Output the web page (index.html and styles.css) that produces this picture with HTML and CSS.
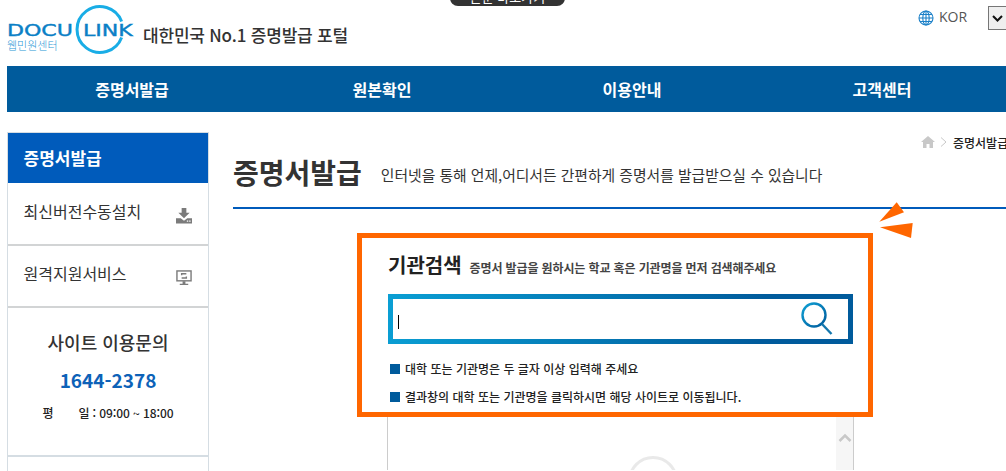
FILE: index.html
```html
<!DOCTYPE html>
<html lang="ko">
<head>
<meta charset="utf-8">
<title>DOCU LINK</title>
<link rel="stylesheet" href="styles.css">
</head>
<body>
<div class="toast"><span>본문 바로가기</span></div>
<div class="page">
  <header class="top">
    <div class="brand">
      <svg class="logo" width="128" height="56" viewBox="0 0 128 56">
        <path class="logo-ring" d="M114.600 20.500A23 23 0 1 0 114.600 36.500"/>
        <text class="logo-word" transform="translate(0 35) scale(1.380 1)" x="0" y="0">DOCU</text>
        <text class="logo-word" transform="translate(76 35) scale(1.380 1)" x="0" y="0">LINK</text>
        <text class="logo-sub" x="0" y="49">웹민원센터</text>
      </svg>
      <strong class="slogan">대한민국 No.1 증명발급 포털</strong>
    </div>
    <div class="lang">
      <svg class="globe" width="16" height="16" viewBox="0 0 16 16">
        <circle cx="8" cy="8" r="7"/>
        <ellipse cx="8" cy="8" rx="3.200" ry="7"/>
        <path d="M1 8H15M2 4.500H14M2 11.500H14M8 1V15"/>
      </svg>
      <span class="lang-label">KOR</span>
      <div class="lang-select">
        <svg width="11" height="7" viewBox="0 0 11 7"><path d="M1 1L5.500 5.500L10 1"/></svg>
      </div>
    </div>
  </header>
  <nav class="gnb">
    <a>증명서발급</a><a>원본확인</a><a>이용안내</a><a>고객센터</a>
  </nav>
  <div class="body">
    <aside class="side">
      <h2 class="side-title">증명서발급</h2>
      <div class="side-item">
        <span>최신버전수동설치</span>
        <svg width="16" height="16" viewBox="0 0 17 17">
          <path class="ic-fill" d="M6 0H11V5H14.500L8.500 11L2.500 5H6Z"/>
          <path class="ic-fill" d="M0 11H5L8.500 13.500L12 11H17V16.500H0Z"/>
          <path class="ic-dots" d="M11.500 14H13M14 14H15.500"/>
        </svg>
      </div>
      <div class="side-item">
        <span>원격지원서비스</span>
        <svg width="16" height="16" viewBox="0 0 17 17">
          <rect class="ic-line" x="1" y="1" width="15" height="10.500"/>
          <path class="ic-fill" d="M7 12H10V14.500H13V16H4V14.500H7Z"/>
          <path class="ic-line" d="M6 5.500V4H11M11 7V8.500H6"/>
        </svg>
      </div>
      <div class="contact">
        <h3 class="contact-title">사이트 이용문의</h3>
        <p class="contact-tel">1644-2378</p>
        <p class="contact-time"><span class="day">평</span><span class="day">일</span> : 09:00 ~ 18:00</p>
      </div>
      <div class="side-rest"></div>
    </aside>
    <main class="main">
      <div class="crumb">
        <svg class="crumb-icon" width="14" height="12" viewBox="0 0 14 12"><path class="crumb-home" d="M7 0L14 6H12V12H8.500V8H5.500V12H2V6H0Z"/></svg>
        <svg width="7" height="10" viewBox="0 0 7 10"><path class="crumb-sep" d="M1 0.500L6 5L1 9.500"/></svg>
        <span>증명서발급</span>
      </div>
      <div class="heading">
        <h1>증명서발급</h1>
        <p>인터넷을 통해 언제,어디서든 간편하게 증명서를 발급받으실 수 있습니다</p>
      </div>
      <section class="panel">
        <svg class="arrows" width="36" height="39" viewBox="0 0 36 39">
          <polygon points="1.300,21.700 18.700,2.300 26,12.300"/>
          <polygon points="2,27.300 34.700,23 33,38"/>
        </svg>
        <div class="panel-head">
          <h2>기관검색</h2>
          <span>증명서 발급을 원하시는 학교 혹은 기관명을 먼저 검색해주세요</span>
        </div>
        <div class="searchbox">
          <div class="search-inner">
            <i class="caret"></i>
            <svg width="32" height="34" viewBox="0 0 32 34">
              <defs>
                <linearGradient id="lens" x1="0" y1="0" x2="1" y2="1">
                  <stop offset="0" stop-color="#0fa0d4"/>
                  <stop offset="1" stop-color="#005b9c"/>
                </linearGradient>
              </defs>
              <circle class="lens" cx="13" cy="13" r="11.500"/>
              <path class="lens-handle" d="M21 22L30.500 32"/>
            </svg>
          </div>
        </div>
        <ul class="notes">
          <li>대학 또는 기관명은 두 글자 이상 입력해 주세요</li>
          <li>결과창의 대학 또는 기관명을 클릭하시면 해당 사이트로 이동됩니다.</li>
        </ul>
      </section>
      <div class="results">
        <div class="results-body"><div class="ring"></div></div>
        <div class="scroll">
          <svg width="14" height="9" viewBox="0 0 14 9"><path d="M1.500 8L7 2.500L12.500 8"/></svg>
        </div>
      </div>
    </main>
  </div>
</div>
</body>
</html>
```
FILE: styles.css
```css
* { box-sizing: border-box; }
html, body {
  margin: 0;
  height: 471px;
  overflow: hidden;
  background: #fff;
}
body {
  font-family: "Noto Sans CJK KR", "Noto Sans", sans-serif;
  color: #333;
  position: relative;
}
h1, h2, h3, p, ul { margin: 0; padding: 0; }
ul { list-style: none; }

.toast {
  position: absolute;
  top: -14px;
  left: 450px;
  width: 115px;
  height: 20px;
  border-radius: 8px;
  background: #333;
  color: #fff;
  font-size: 13px;
  line-height: 22px;
  text-align: center;
  overflow: hidden;
}

.page {
  width: 1000px;
  margin-left: 7px;
}

.top {
  height: 66px;
  display: flex;
  justify-content: space-between;
}
.brand {
  display: flex;
  align-items: flex-start;
}
.logo { margin-top: 1px; flex: none; }
.logo-ring { fill: none; stroke: #19ade6; stroke-width: 3; }
.logo-word {
  font-family: "DejaVu Sans", sans-serif;
  font-size: 16px;
  font-weight: 400;
  fill: #0a80c6;
  stroke: #0a80c6;
  stroke-width: 0.4px;
}
.logo-sub {
  font-family: "Noto Sans CJK KR", sans-serif;
  font-size: 11px;
  font-weight: 300;
  fill: #2b97d6;
}
.slogan {
  margin: 22px 0 0 8px;
  font-size: 17px;
  line-height: 26px;
  font-weight: 500;
  color: #333;
  letter-spacing: -0.2px;
}

.lang {
  display: flex;
  align-items: flex-start;
  width: 89px;
  flex: none;
}
.globe { margin: 10px 0 0 0; flex: none; }
.globe circle, .globe ellipse, .globe path { fill: none; stroke: #1b80c8; stroke-width: 1.100; }
.lang-label {
  margin: 8px 0 0 5px;
  font-family: "Open Sans", sans-serif;
  font-size: 14px;
  line-height: 18px;
  color: #555;
  width: 49px;
}
.lang-select {
  margin: 6px 0 0 0;
  width: 19px;
  height: 24px;
  flex: none;
  border: 1px solid #767676;
  background: #efefef;
  display: flex;
  justify-content: center;
  align-items: center;
  padding-right: 1px;
}
.lang-select path { fill: none; stroke: #111; stroke-width: 2; }

.gnb {
  height: 46px;
  display: grid;
  grid-template-columns: repeat(4, 250px);
  background: #005b9c;
}
.gnb a {
  color: #fff;
  font-size: 16px;
  font-weight: 700;
  line-height: 46px;
  text-align: center;
}

.body {
  display: flex;
  margin-top: 20px;
}

.side {
  width: 202px;
  flex: none;
  height: 339px;
  border: 1px solid #d5dde3;
  border-bottom: 0;
  overflow: hidden;
}
.side-title {
  height: 50px;
  background: #005bbb;
  color: #fff;
  font-size: 17px;
  font-weight: 700;
  line-height: 50px;
  padding-left: 15.500px;
  margin-bottom: 1px;
}
.side-item {
  height: 62px;
  border-bottom: 2px solid #d2d4d5;
  display: flex;
  justify-content: space-between;
  align-items: center;
  padding: 0 16px 0 15.500px;
  font-size: 16px;
  font-weight: 400;
  color: #333;
}
.side-item span { position: relative; top: -3px; }
.side-item svg { margin-top: 3px; }
.ic-fill { fill: #7b7b7b; }
.ic-line { fill: none; stroke: #7b7b7b; stroke-width: 1.500; }
.ic-dots { stroke: #fff; stroke-width: 1.200; fill: none; }

.contact {
  height: 149px;
  border-bottom: 2px solid #d5dde3;
  text-align: center;
  padding-top: 19px;
}
.contact-title {
  font-size: 18px;
  font-weight: 500;
  line-height: 30px;
  color: #333;
}
.contact-tel {
  margin-top: 8px;
  font-size: 19px;
  font-weight: 700;
  line-height: 30px;
  color: #0d62b8;
}
.contact-time {
  margin-top: 8px;
  font-size: 12px;
  font-weight: 500;
  line-height: 20px;
  color: #222;
  letter-spacing: -0.1px;
}
.day { display: inline-block; }
.day + .day { margin-left: 25px; }

.main {
  flex: 1;
  min-width: 0;
  padding-left: 24px;
  display: flex;
  flex-direction: column;
  align-items: flex-start;
}
.crumb {
  align-self: stretch;
  height: 20px;
  display: flex;
  justify-content: flex-end;
  align-items: center;
  gap: 6px;
  font-size: 12px;
  font-weight: 500;
  color: #222;
  white-space: nowrap;
  overflow: hidden;
}
.crumb span { width: 54px; flex: none; }
.crumb-icon { margin-right: -1px; }
.crumb-home { fill: #c8c8c8; }
.crumb-sep { fill: none; stroke: #c8c8c8; stroke-width: 1; }

.heading {
  align-self: stretch;
  height: 57px;
  border-bottom: 2px solid #005bbb;
  display: flex;
  align-items: flex-start;
  gap: 19px;
}
.heading h1 {
  font-size: 28px;
  font-weight: 700;
  line-height: 40px;
  color: #333;
  margin-top: 0;
}
.heading p {
  font-size: 14.800px;
  line-height: 24px;
  color: #333;
  margin-top: 11px;
  white-space: nowrap;
}

.panel {
  position: relative;
  margin: 24px 0 0 124px;
  width: 516px;
  height: 184px;
  border: 5px solid #ff6600;
  padding: 12px 15px 0 26px;
  background: #fff;
  z-index: 1;
}
.arrows {
  position: absolute;
  top: -38px;
  left: 516px;
}
.arrows polygon { fill: #ff6600; }
.panel-head {
  display: flex;
  align-items: baseline;
  gap: 8px;
  height: 44px;
}
.panel-head h2 {
  font-size: 20px;
  font-weight: 700;
  line-height: 30px;
  color: #222;
}
.panel-head span {
  font-size: 12px;
  font-weight: 700;
  color: #444;
  letter-spacing: -0.12px;
}
.searchbox {
  height: 50px;
  padding: 5px;
  background: linear-gradient(100deg, #0a9fd4 0%, #005b9c 80%);
}
.search-inner {
  height: 100%;
  background: #fff;
  display: flex;
  justify-content: space-between;
  align-items: center;
  padding: 0 15px 0 5px;
}
.caret {
  width: 1px;
  height: 14px;
  background: #000;
  margin-top: 6px;
}
.lens { fill: none; stroke: url(#lens); stroke-width: 2.400; }
.lens-handle { fill: none; stroke: #1477ad; stroke-width: 2.400; }

.notes {
  margin-top: 11px;
  padding-left: 2px;
  font-size: 12px;
  font-weight: 500;
  color: #222;
}
.notes li {
  height: 28px;
  line-height: 28px;
  display: flex;
  align-items: center;
  gap: 5px;
}
.notes li::before {
  content: "";
  width: 10px;
  height: 10px;
  background: #005b9c;
  flex: none;
}

.results {
  margin: 0 0 0 154px;
  width: 467px;
  height: 53px;
  flex: none;
  border: 1px solid #ccc;
  border-top: 0;
  border-bottom: 0;
  display: flex;
  overflow: hidden;
}
.results-body {
  flex: 1;
  padding: 39px 0 0 240px;
}
.ring {
  width: 50px;
  height: 50px;
  border: 3px solid #e9e9e9;
  border-radius: 50%;
}
.scroll {
  width: 17px;
  background: #f6f6f6;
  display: flex;
  justify-content: center;
  align-items: flex-start;
  padding-top: 16px;
}
.scroll path { fill: none; stroke: #c8c8c8; stroke-width: 2.500; }
```
